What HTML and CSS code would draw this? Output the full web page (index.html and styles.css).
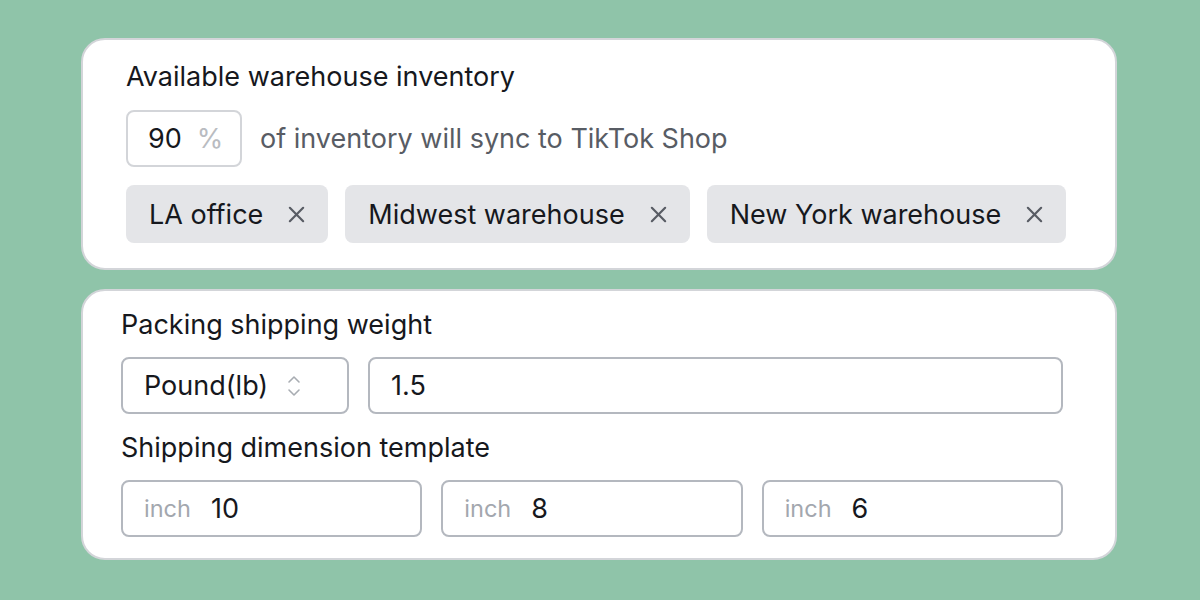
FILE: index.html
```html
<!DOCTYPE html>
<html>
<head>
<meta charset="utf-8">
<link rel="stylesheet" href="styles.css">
</head>
<body>
<div class="page">
  <section class="card card-inventory">
    <div class="label">Available warehouse inventory</div>
    <div class="sync-row">
      <div class="pct-box"><span class="pct-value">90</span><span class="pct-unit">%</span></div>
      <span class="sync-text">of inventory will sync to TikTok Shop</span>
    </div>
    <div class="tags">
      <div class="tag"><span>LA office</span><svg class="x" viewBox="0 0 20 20"><path d="M3 3L17 17M17 3L3 17"/></svg></div>
      <div class="tag"><span>Midwest warehouse</span><svg class="x" viewBox="0 0 20 20"><path d="M3 3L17 17M17 3L3 17"/></svg></div>
      <div class="tag"><span>New York warehouse</span><svg class="x" viewBox="0 0 20 20"><path d="M3 3L17 17M17 3L3 17"/></svg></div>
    </div>
  </section>
  <section class="card card-shipping">
    <div class="label">Packing shipping weight</div>
    <div class="weight-row">
      <div class="field select"><span>Pound(lb)</span><svg class="chev" viewBox="0 0 16 28"><path d="M3 10L8 5L13 10M3 18L8 23L13 18"/></svg></div>
      <div class="field grow"><span>1.5</span></div>
    </div>
    <div class="label label-2">Shipping dimension template</div>
    <div class="dim-row">
      <div class="field"><span class="unit">inch</span><span>10</span></div>
      <div class="field"><span class="unit">inch</span><span>8</span></div>
      <div class="field"><span class="unit">inch</span><span>6</span></div>
    </div>
  </section>
</div>
</body>
</html>
```
FILE: styles.css
```css
* { box-sizing: border-box; }
html, body { margin: 0; padding: 0; }
body {
  width: 1200px;
  height: 600px;
  overflow: hidden;
  background: #8fc4a9;
  font-family: Inter, "Noto Sans", sans-serif;
  color: #16181d;
}
.page {
  padding: 38px 83px 0 81px;
  display: flex;
  flex-direction: column;
  gap: 19px;
}
.card {
  background: #fff;
  border: 2px solid #d3d5d9;
  border-radius: 24px;
}
.card-inventory {
  height: 232px;
  padding: 19px 44px 0 43px;
}
.card-shipping {
  height: 271px;
  padding: 16px 52px 0 38px;
}
.label {
  font-size: 27px;
  line-height: 36px;
  color: #16181d;
}
.sync-row {
  display: flex;
  align-items: center;
  gap: 18px;
  margin-top: 15px;
}
.pct-box {
  width: 116px;
  height: 57px;
  border: 2px solid #d3d5d9;
  border-radius: 8px;
  display: flex;
  align-items: center;
  padding-left: 20px;
  font-size: 27px;
}
.pct-value { color: #16181d; }
.pct-unit { color: #b9bcc1; margin-left: 15px; }
.sync-text { font-size: 27px; color: #585c64; }
.tags {
  display: flex;
  gap: 17px;
  margin-top: 18px;
}
.tag {
  height: 58px;
  background: #e4e5e8;
  border-radius: 8px;
  display: flex;
  align-items: center;
  padding: 0 22px 0 23px;
  font-size: 27px;
  color: #16181d;
}
.tag .x {
  width: 19px;
  height: 19px;
  margin-left: 24px;
  fill: none;
  stroke: #585c64;
  stroke-width: 2.3;
  stroke-linecap: round;
}
.weight-row, .dim-row {
  display: flex;
  gap: 19px;
}
.weight-row { margin-top: 14px; }
.dim-row { margin-top: 14px; }
.field {
  height: 57px;
  border: 2px solid #b4b8bf;
  border-radius: 8px;
  display: flex;
  align-items: center;
  padding-left: 21px;
  font-size: 27px;
  color: #16181d;
}
.select { width: 228px; }
.select .chev {
  width: 16px;
  height: 28px;
  margin-left: 18px;
  fill: none;
  stroke: #a8acb2;
  stroke-width: 1.6;
  stroke-linecap: round;
  stroke-linejoin: round;
}
.grow { flex: 1; }
.dim-row .field { flex: 1; }
.unit { color: #a3a7ae; font-size: 23.5px; margin-right: 20px; }
.label-2 { margin-top: 16px; }
```
